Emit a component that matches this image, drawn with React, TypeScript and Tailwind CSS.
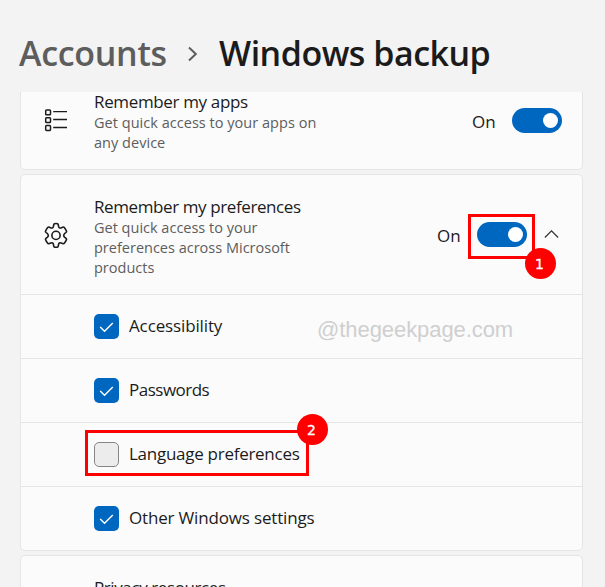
import type { ReactNode } from "react";

function Toggle() {
  return (
    <span className="flex h-[25px] w-[50px] shrink-0 items-center justify-end rounded-full bg-[#0067c0] pr-1">
      <span className="size-[15px] rounded-full bg-white" />
    </span>
  );
}

function Badge({ children, className }: { children: ReactNode; className: string }) {
  return (
    <span
      className={`absolute z-10 flex size-[31px] items-center justify-center rounded-full bg-[#fe0000] pr-px font-['DejaVu_Sans',sans-serif] text-[14px] leading-none text-white [-webkit-text-stroke:0.3px_white] ${className}`}
    >
      {children}
    </span>
  );
}

function ListIcon() {
  return (
    <svg width="24" height="24" viewBox="0 0 24 24" fill="none" stroke="#1b1b1b" strokeWidth="1.5">
      <rect x="1.7" y="2" width="4.8" height="4.8" rx="0.8" />
      <rect x="1.7" y="9.8" width="4.8" height="4.8" rx="0.8" />
      <rect x="1.7" y="17.6" width="4.8" height="4.8" rx="0.8" />
      <path d="M9.2 3.6H23M9.2 11.5H23M9.2 19.5H23" strokeWidth="1.4" />
    </svg>
  );
}

function GearIcon() {
  return (
    <svg width="26" height="26" viewBox="0 0 26 26" fill="none" stroke="#1b1b1b" strokeWidth="1.6" strokeLinejoin="round">
      <circle cx="13" cy="13.4" r="4.1" />
      <path
        transform="translate(0 .4)"
        d="M11.6 1.3Q13 1 14.4 1.3Q15.2 1.5 15.3 2.4L15.6 4.2Q16 6 17.9 5.5L19.7 4.8Q20.7 4.4 21.3 5.1Q22.8 6.8 23.5 8.8Q23.7 9.5 23 10.1L21.5 11.3Q19.9 13 21.5 14.7L23 15.9Q23.7 16.5 23.5 17.2Q22.8 19.2 21.3 20.9Q20.7 21.6 19.7 21.2L17.9 20.5Q16 20 15.6 21.8L15.3 23.6Q15.2 24.5 14.4 24.7Q13 25 11.6 24.7Q10.8 24.5 10.7 23.6L10.4 21.8Q10 20 8.1 20.5L6.3 21.2Q5.3 21.6 4.7 20.9Q3.2 19.2 2.5 17.2Q2.3 16.5 3 15.9L4.5 14.7Q6.1 13 4.5 11.3L3 10.1Q2.3 9.5 2.5 8.8Q3.2 6.8 4.7 5.1Q5.3 4.4 6.3 4.8L8.1 5.5Q10 6 10.4 4.2L10.7 2.4Q10.8 1.5 11.6 1.3Z"
      />
    </svg>
  );
}

function Checkbox({ checked }: { checked: boolean }) {
  if (!checked) {
    return <span className="size-[25px] shrink-0 rounded-[5px] border border-[#868686] bg-[#ececec]" />;
  }
  return (
    <span className="flex size-[25px] shrink-0 items-center justify-center rounded-[5px] bg-[#0067c0]">
      <svg width="25" height="25" viewBox="0 0 25 25" fill="none" stroke="white" strokeWidth="1.4">
        <path d="M6.2 13L10.5 17.2L18.8 8.9" />
      </svg>
    </span>
  );
}

const options = [
  { label: "Accessibility", checked: true, tracking: "tracking-[-0.13px]" },
  { label: "Passwords", checked: true, tracking: "tracking-[-0.5px]" },
  { label: "Language preferences", checked: false, tracking: "tracking-[-0.27px]" },
  { label: "Other Windows settings", checked: true, tracking: "tracking-[-0.17px]" },
];

export default function App() {
  return (
    <main className="flex h-[587px] w-[605px] flex-col overflow-hidden bg-[#f3f3f3] font-['Open_Sans','Noto_Sans',sans-serif] text-[17px] text-[#1b1b1b]">
      <header className="flex h-[92px] shrink-0 items-center pt-[15px] pl-[19px] text-[34px] font-semibold whitespace-nowrap">
        <span className="w-[147px] tracking-[-0.3px] text-[#5d5d5d]">Accounts</span>
        <svg className="mr-[20px] ml-[21px] shrink-0" width="12" height="16" viewBox="0 0 12 16" fill="none" stroke="#5d5d5d" strokeWidth="2">
          <path d="M2 1.5L8.8 8L2 14.5" />
        </svg>
        <h1 className="tracking-[-0.5px]">Windows backup</h1>
      </header>

      <div className="ml-5 flex w-[563px] flex-col gap-1">
        <section className="flex h-[78px] rounded-b-[5px] border border-t-0 border-[#e5e5e5] bg-[#fbfbfb]">
          <div className="mt-[16px] ml-[23px] w-[50px] shrink-0"><ListIcon /></div>
          <div className="w-[378px] shrink-0">
            <div className="h-[21px] leading-[20px] tracking-[-0.35px]">Remember my apps</div>
            <p className="text-[14.5px] leading-5 tracking-[0.03px] text-[#5d5d5d]">Get quick access to your apps on<br />any device</p>
          </div>
          <span className="mt-[18px] w-[40px] leading-6">On</span>
          <div className="mt-4"><Toggle /></div>
        </section>

        <section className="rounded-[5px] border border-[#e5e5e5] bg-[#fbfbfb]">
          <div className="flex h-[119px]">
            <div className="mt-[47px] ml-[22px] w-[51px] shrink-0"><GearIcon /></div>
            <div className="w-[343px] shrink-0 pt-[22px]">
              <div className="h-[21px] leading-[20px] tracking-[-0.4px]">Remember my preferences</div>
              <p className="text-[14.5px] leading-5 text-[#5d5d5d]">Get quick access to your<br />preferences across Microsoft<br />products</p>
            </div>
            <span className="mt-[49px] w-[31px] shrink-0 leading-6">On</span>
            <div className="relative mt-[39px] flex h-[45px] w-[67px] shrink-0 justify-center border-[3px] border-[#fe0000] pt-[5px]">
              <Toggle />
              <Badge className="top-[31px] left-[53.5px]">1</Badge>
            </div>
            <svg className="mt-[54px] ml-[9px] shrink-0" width="15" height="10" viewBox="0 0 15 10" fill="none" stroke="#333" strokeWidth="1.2">
              <path d="M.9 8.5L7.5 1.8L14.1 8.5" />
            </svg>
          </div>
          {options.map((option) => (
            <div key={option.label} className="relative flex h-16 items-center border-t border-[#e5e5e5] pl-[73px]">
              <Checkbox checked={option.checked} />
              <span className={`mb-[2px] ml-[10px] leading-6 ${option.tracking}`}>{option.label}</span>
              {option.label === "Accessibility" && (
                <span className="absolute top-[20px] left-[296px] font-['Liberation_Sans',Arial,sans-serif] text-[22px] leading-[30px] tracking-[-0.07px] text-[#cfcfcf]">@thegeekpage.com</span>
              )}
              {!option.checked && (
                <span className="absolute top-[7px] left-[64px] h-[46px] w-[224px] border-[3px] border-[#fe0000]">
                  <Badge className="-top-[19px] left-[208.5px]">2</Badge>
                </span>
              )}
            </div>
          ))}
        </section>

        <section className="h-[100px] rounded-t-[5px] border border-[#e5e5e5] bg-[#fbfbfb] pt-[20px] pl-[73px] leading-6 tracking-[-0.4px]">
          Privacy resources
        </section>
      </div>
    </main>
  );
}
